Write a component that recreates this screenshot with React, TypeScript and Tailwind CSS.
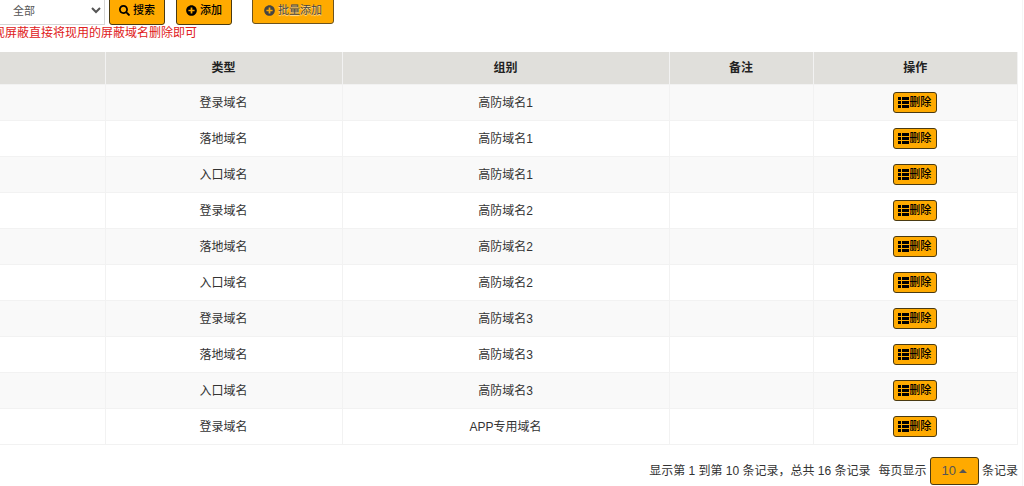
import { FaPlusCircle, FaSearch } from "react-icons/fa";

type DomainType = {
  type: string,
  group: string,
  remark: string
}

const domains: DomainType[] = [
  { type: "登录域名", group: "高防域名1", remark: "" },
  { type: "落地域名", group: "高防域名1", remark: "" },
  { type: "入口域名", group: "高防域名1", remark: "" },
  { type: "登录域名", group: "高防域名2", remark: "" },
  { type: "落地域名", group: "高防域名2", remark: "" },
  { type: "入口域名", group: "高防域名2", remark: "" },
  { type: "登录域名", group: "高防域名3", remark: "" },
  { type: "落地域名", group: "高防域名3", remark: "" },
  { type: "入口域名", group: "高防域名3", remark: "" },
  { type: "登录域名", group: "APP专用域名", remark: "" },
];

function ListIcon() {
  return (
    <svg viewBox="0 0 11 11" className="size-[11px]" fill="currentColor" shapeRendering="crispEdges" aria-hidden="true">
      <path d="M0 0h3v3H0zM4 0h7v3H4zM0 4h3v3H0zM4 4h7v3H4zM0 8h3v3H0zM4 8h7v3H4z" />
    </svg>
  );
}

function Toolbar() {
  return (
    <div className="-mt-1 flex items-start">
      <select aria-label="类型" defaultValue="全部" className="h-[29px] w-[105px] border border-l-0 border-[#d5d5d5] bg-white pl-[9px] text-[11px] text-[#555]">
        <option>全部</option>
      </select>
      <button className="ml-1 flex h-[29px] items-center gap-[3px] rounded-[3px] border border-[#4a3a12] bg-[#ffaa00] px-[9px] text-[11px] font-medium text-black">
        <FaSearch className="size-[11px]" /> <span>搜索</span>
      </button>
      <button className="ml-[11px] flex h-[29px] items-center gap-[3px] rounded-[3px] border border-[#4a3a12] bg-[#ffaa00] px-[9px] text-[11px] font-medium text-black">
        <FaPlusCircle className="size-[11px]" /> <span>添加</span>
      </button>
      <button className="ml-5 flex h-7 items-center gap-[3px] rounded-[3px] border border-[#6b5320] bg-[#ffaa00] px-[11px] text-[11px] text-[#444] text-shadow-[0_1px_1px_#ffffffbf]">
        <FaPlusCircle className="size-[11px]" /> <span>批量添加</span>
      </button>
    </div>
  );
}

function DomainRow({ domain }: { domain: DomainType }) {
  return (
    <tr className="h-9 border-b border-[#f2f2f2] odd:bg-[#f9f9f9]">
      <td className="border-r border-[#f2f2f2]"></td>
      <td className="border-r border-[#f2f2f2] pt-[2px]">{domain.type}</td>
      <td className="border-r border-[#f2f2f2] pt-[2px]">{domain.group}</td>
      <td className="border-r border-[#f2f2f2] pt-[2px]">{domain.remark}</td>
      <td className="border-r border-[#f2f2f2]">
        <button className="inline-flex h-[21px] items-center rounded-[3px] border border-[#4a3a12] bg-[#ffaa00] pr-[5px] pl-1 align-middle text-[11px] font-medium text-black">
          <ListIcon /><span>删除</span>
        </button>
      </td>
    </tr>
  );
}

function App() {
  return (
    <div className="overflow-hidden bg-white font-['Liberation_Sans','Noto_Sans_CJK_SC',sans-serif] text-xs text-[#333]">
      <div className="mr-[1px] border-r border-[#f5f5f5] pr-1">
        <Toolbar />
        <p className="-ml-[7px] whitespace-nowrap text-[#e02020]">现屏蔽直接将现用的屏蔽域名删除即可</p>
        <table className="mt-[11px] w-full table-fixed border-collapse text-center">
          <colgroup>
            <col className="w-[105px]" />
            <col className="w-[237px]" />
            <col className="w-[327px]" />
            <col className="w-[144px]" />
            <col />
          </colgroup>
          <thead>
            <tr className="h-8 border-b border-[#f2f2f2] bg-[#e0dfdb] text-[#222]">
              <th className="border-r border-[#f2f2f2]"></th>
              <th className="border-r border-[#f2f2f2]">类型</th>
              <th className="border-r border-[#f2f2f2]">组别</th>
              <th className="border-r border-[#f2f2f2]">备注</th>
              <th className="border-r border-[#f2f2f2]">操作</th>
            </tr>
          </thead>
          <tbody>
            {domains.map((domain, index) => (
              <DomainRow key={index} domain={domain} />
            ))}
          </tbody>
        </table>
        <div className="mt-3 flex items-center justify-end pb-1">
          <span>显示第 1 到第 10 条记录，总共 16 条记录</span>
          <label htmlFor="page-size" className="ml-2">每页显示</label>
          <button id="page-size" className="mx-[3px] flex h-7 items-center gap-[3px] rounded-[3px] border border-[#4a3a12] bg-[#ffaa00] px-[11px] text-[13px] text-[#555]">
            10
            <svg viewBox="0 0 8 4" className="h-1 w-2" fill="currentColor" aria-hidden="true"><path d="M0 4 4 0l4 4z" /></svg>
          </button>
          <span>条记录</span>
        </div>
      </div>
    </div>
  );
}

export default App;
